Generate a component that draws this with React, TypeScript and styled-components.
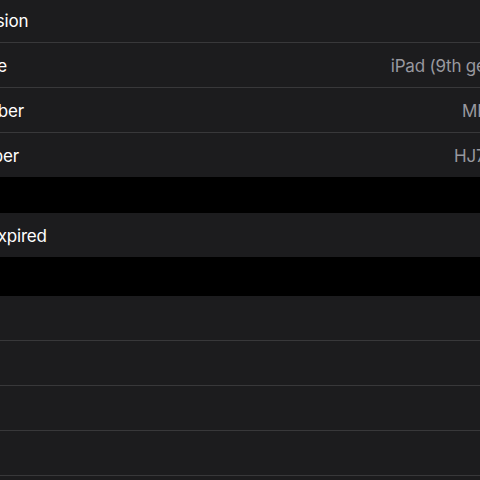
import React from 'react';
import styled, { createGlobalStyle } from 'styled-components';
import { ChevronRight } from 'lucide-react';

const GlobalStyle = createGlobalStyle`
  html, body {
    margin: 0;
    padding: 0;
    background: #000000;
    overflow: hidden;
  }
  body {
    font-family: Inter, "Noto Sans", "Liberation Sans", sans-serif;
    -webkit-font-smoothing: antialiased;
  }
`;

// the screenshot is a crop of a wider settings list, so the list
// starts left of the window and runs past its right edge
const List = styled.div`
  width: 681px;
  margin: -2px 0 0 -109px;
  display: flex;
  flex-direction: column;
`;

const Group = styled.div<{ $gapAfter?: number }>`
  display: flex;
  flex-direction: column;
  background: #1c1c1e;
  margin-bottom: ${(p) => p.$gapAfter ?? 0}px;
`;

const Row = styled.div`
  height: 44px;
  padding: 0 16px;
  display: flex;
  align-items: center;
  justify-content: space-between;
  background: #1c1c1e;

  & + & {
    border-top: 1px solid #38383a;
  }
`;

const Label = styled.span`
  font-size: 17px;
  line-height: 22px;
  padding-top: 1px;
  color: #ffffff;
  letter-spacing: -0.2px;
  white-space: nowrap;
`;

const Value = styled.span`
  display: flex;
  align-items: center;
  gap: 6px;
  font-size: 17px;
  line-height: 22px;
  padding-top: 1px;
  color: #98989f;
  letter-spacing: -0.2px;
  white-space: nowrap;
`;

type Item = { label: string; value?: string; chevron?: boolean };

const info: Item[] = [
  { label: 'iPadOS Version', value: '16.6.1' },
  { label: 'Model Name', value: 'iPad (9th generation)' },
  { label: 'Model Number', value: 'MK2K3LL/A' },
  { label: 'Serial Number', value: 'HJ7X2M9PQ' },
];

const coverage: Item[] = [{ label: 'Coverage Expired', chevron: true }];

const media: Item[] = [
  { label: 'Songs', value: '0' },
  { label: 'Videos', value: '0' },
  { label: 'Photos', value: '412' },
  { label: 'Books', value: '3' },
  { label: 'Apps', value: '38' },
];

function Section({ items, gapAfter }: { items: Item[]; gapAfter?: number }) {
  return (
    <Group $gapAfter={gapAfter}>
      {items.map((item) => (
        <Row key={item.label}>
          <Label>{item.label}</Label>
          <Value>
            {item.value}
            {item.chevron && <ChevronRight size={18} color="#5a5a5f" />}
          </Value>
        </Row>
      ))}
    </Group>
  );
}

export default function App() {
  return (
    <>
      <GlobalStyle />
      <List>
        <Section items={info} gapAfter={36} />
        <Section items={coverage} gapAfter={39} />
        <Section items={media} />
      </List>
    </>
  );
}
